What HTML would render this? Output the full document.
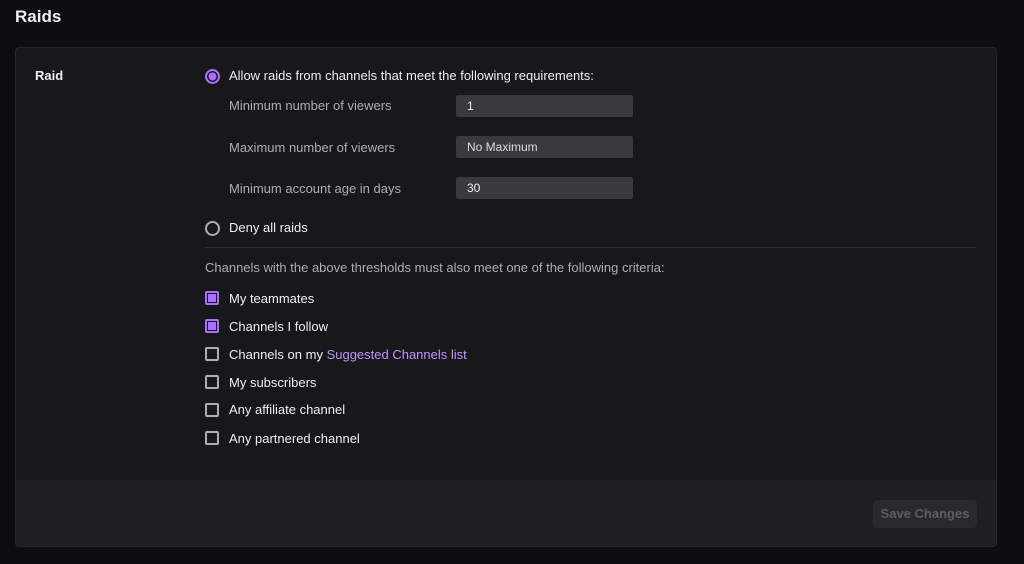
<!DOCTYPE html>
<html><head><meta charset="utf-8"><style>
*{margin:0;padding:0;box-sizing:border-box}
body{width:1024px;height:564px;background:#0e0e10;font-family:"Liberation Sans",sans-serif;color:#efeff1;position:relative;overflow:hidden;font-size:13px}
.a{position:absolute;white-space:nowrap}
.panel{position:absolute;left:15px;top:47px;width:982px;height:500px;background:#18181b;border:1px solid #26262b;border-radius:4px;overflow:hidden}
.foot{position:absolute;left:0;top:432px;width:100%;height:68px;background:#1f1f23}
.inp{position:absolute;left:456px;width:177px;height:22px;background:#3a3a3d;border-radius:2px;padding-left:11px;line-height:22px;font-size:12px;color:#efeff1}
.lbl{color:#adadb8;font-size:13px}
.cb{position:absolute;left:205px;width:14px;height:14px;border:2px solid #adadb8;border-radius:2px}
.cb.on{border-color:#a970ff;background:#a970ff;box-shadow:inset 0 0 0 1px #18181b}
.rd{position:absolute;left:205px;width:15px;height:15px;border:2px solid #adadb8;border-radius:50%}
.rd.on{border-color:#a970ff;background:#a970ff;box-shadow:inset 0 0 0 1.5px #18181b}
</style></head><body>
<div class="a" style="left:15px;top:7px;font-size:17px;font-weight:bold">Raids</div>
<div class="panel"><div class="foot"></div>
<div style="position:absolute;right:19px;top:452px;width:104px;height:28px;background:#2a2a2e;border-radius:4px;color:#5c5c63;font-weight:bold;font-size:13px;line-height:28px;text-align:center">Save Changes</div>
</div>
<div class="a" style="left:35px;top:68px;font-weight:bold;font-size:13px">Raid</div>
<div class="rd on" style="top:69px"></div>
<div class="a" style="left:229px;top:68px">Allow raids from channels that meet the following requirements:</div>
<div class="a lbl" style="left:229px;top:98px">Minimum number of viewers</div>
<div class="inp" style="top:95px">1</div>
<div class="a lbl" style="left:229px;top:140px">Maximum number of viewers</div>
<div class="inp" style="top:136px;color:#dcdce0">No Maximum</div>
<div class="a lbl" style="left:229px;top:181px">Minimum account age in days</div>
<div class="inp" style="top:177px">30</div>
<div class="rd" style="top:221px"></div>
<div class="a" style="left:229px;top:220px">Deny all raids</div>
<div style="position:absolute;left:205px;top:247px;width:771px;height:1px;background:#2f2f35"></div>
<div class="a lbl" style="left:205px;top:260px">Channels with the above thresholds must also meet one of the following criteria:</div>
<div class="cb on" style="top:291px"></div><div class="a" style="left:229px;top:291px">My teammates</div>
<div class="cb on" style="top:319px"></div><div class="a" style="left:229px;top:319px">Channels I follow</div>
<div class="cb" style="top:347px"></div><div class="a" style="left:229px;top:347px">Channels on my <span style="color:#bf94ff">Suggested Channels list</span></div>
<div class="cb" style="top:375px"></div><div class="a" style="left:229px;top:375px">My subscribers</div>
<div class="cb" style="top:403px"></div><div class="a" style="left:229px;top:402px">Any affiliate channel</div>
<div class="cb" style="top:431px"></div><div class="a" style="left:229px;top:431px">Any partnered channel</div>
</body></html>
